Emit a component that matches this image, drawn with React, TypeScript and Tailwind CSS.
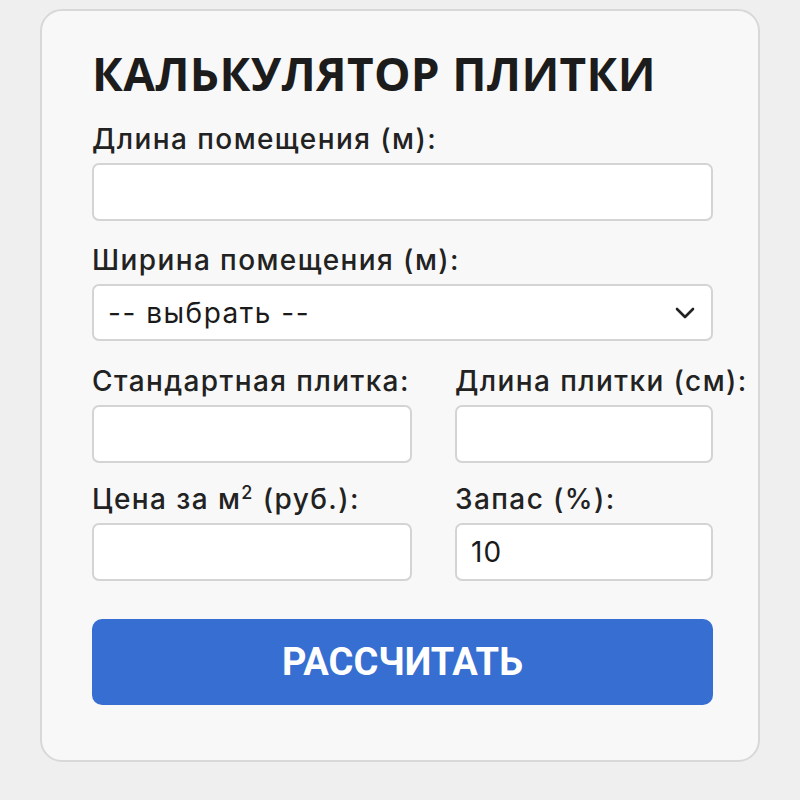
import React from 'react';

const labelCls = 'block whitespace-nowrap text-[28px] leading-[34px] font-medium text-[#222] tracking-[1.4px]';
const inputCls =
  'block w-full h-[58px] rounded-[7px] border-2 border-[#d4d4d4] bg-white px-[14px] text-[28px] tracking-[1px] text-[#1a1a1a] outline-none';

function Field({ label, value, className }: { label: React.ReactNode; value?: string; className?: string }) {
  return (
    <div className={className}>
      <label className={labelCls}>{label}</label>
      <input className={`${inputCls} mt-[7px]`} defaultValue={value} />
    </div>
  );
}

export default function App() {
  return (
    <div
      className="min-h-[800px] w-[800px] bg-[#efefef] pt-[9px] pl-[40px]"
      style={{ fontFamily: 'Inter, "Noto Sans", sans-serif' }}
    >
      <div className="w-[720px] h-[753px] rounded-[22px] border-2 border-[#d8d8d8] bg-[#f8f8f8] pl-[50px] pr-[45px] pt-[32px]">
        <div className="w-[621px]">
          <h1
            className="text-[46px] leading-[60px] font-bold text-[#1c1c1c] tracking-[0.3px]"
            style={{ fontFamily: '"Open Sans", sans-serif' }}
          >
            КАЛЬКУЛЯТОР ПЛИТКИ
          </h1>

          <Field className="mt-[19px]" label="Длина помещения (м):" />

          <div className="mt-[22px]">
            <label className={labelCls}>Ширина помещения (м):</label>
            <div className="mt-[7px] flex h-[57px] items-center justify-between rounded-[7px] border-2 border-[#d4d4d4] bg-white pl-[14px] pr-[14px]">
              <span className="text-[28px] tracking-[1.5px] text-[#1a1a1a]">-- выбрать --</span>
              <svg width="20" height="12" viewBox="0 0 20 12" fill="none" className="mr-[2px]">
                <path d="M2 2l8 8 8-8" stroke="#222" strokeWidth="2.6" strokeLinecap="round" strokeLinejoin="round" />
              </svg>
            </div>
          </div>

          <div className="mt-[23px] grid grid-cols-[320px_258px] gap-x-[43px] gap-y-[19px]">
            <Field label="Стандартная плитка:" />
            <Field label="Длина плитки (см):" />
            <Field
              label={
                <>
                  Цена за м<span className="align-super text-[18px] leading-none">2</span> (руб.):
                </>
              }
            />
            <Field label="Запас (%):" value="10" />
          </div>

          <button
            className="mt-[38px] flex h-[86px] w-full items-center justify-center rounded-[10px] bg-[#376ed1] text-[38px] font-bold text-white"
            style={{ fontFamily: 'Roboto, sans-serif' }}
          >
            РАССЧИТАТЬ
          </button>
        </div>
      </div>
    </div>
  );
}
